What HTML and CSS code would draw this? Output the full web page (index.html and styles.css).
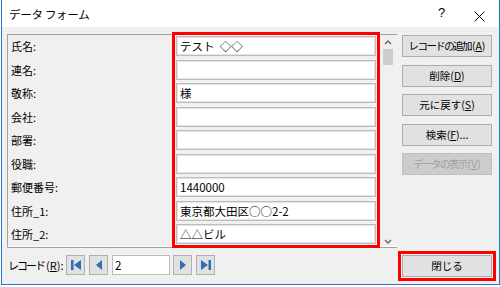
FILE: index.html
```html
<!DOCTYPE html>
<html>
<head>
  <title>データ フォーム</title>
  <link rel="stylesheet" href="styles.css">
</head>
<body>
  <div class="window">
    <div class="titlebar">
      <span class="title">データ フォーム</span>
      <span class="help">?</span>
      <span class="close-x">
        <svg width="11" height="11" viewBox="0 0 11 11"><path d="M0.5 0.5 L10.5 10.5 M10.5 0.5 L0.5 10.5" stroke="#000" stroke-width="1"/></svg>
      </span>
    </div>

    <div class="content">
      <div class="left">
        <div class="panel">
          <div class="labels">
            <div class="label">氏名:</div>
            <div class="label">連名:</div>
            <div class="label">敬称:</div>
            <div class="label">会社:</div>
            <div class="label">部署:</div>
            <div class="label">役職:</div>
            <div class="label">郵便番号:</div>
            <div class="label">住所_1:</div>
            <div class="label">住所_2:</div>
          </div>
          <div class="fields">
            <div class="field">テスト&nbsp;&nbsp;◇◇</div>
            <div class="field"></div>
            <div class="field">様</div>
            <div class="field"></div>
            <div class="field"></div>
            <div class="field"></div>
            <div class="field">1440000</div>
            <div class="field">東京都大田区○○2-2</div>
            <div class="field">△△ビル</div>
          </div>
          <div class="scroll">
            <svg class="arrow" width="10" height="8" viewBox="0 0 10 8"><path d="M2 6 L5 3 L8 6" fill="none" stroke="#606060" stroke-width="1.3"/></svg>
            <div class="thumb"></div>
            <div class="track"></div>
            <svg class="arrow" width="10" height="8" viewBox="0 0 10 8"><path d="M2 2 L5 5 L8 2" fill="none" stroke="#606060" stroke-width="1.3"/></svg>
          </div>
        </div>

        <div class="nav">
          <span class="nav-label"><span class="jp">レコード</span>(<u>R</u>):</span>
          <span class="nav-btn">
            <svg width="12" height="12" viewBox="0 0 12 12"><rect x="1" y="1" width="2.5" height="10" fill="#2f6fb3"/><path d="M11 1 L4 6 L11 11 Z" fill="#2f6fb3"/></svg>
          </span>
          <span class="nav-btn">
            <svg width="12" height="12" viewBox="0 0 12 12"><path d="M9 1 L3 6 L9 11 Z" fill="#2f6fb3"/></svg>
          </span>
          <span class="nav-input">2</span>
          <span class="nav-btn">
            <svg width="12" height="12" viewBox="0 0 12 12"><path d="M3 1 L9 6 L3 11 Z" fill="#2f6fb3"/></svg>
          </span>
          <span class="nav-btn">
            <svg width="12" height="12" viewBox="0 0 12 12"><path d="M1 1 L8 6 L1 11 Z" fill="#2f6fb3"/><rect x="8.5" y="1" width="2.5" height="10" fill="#2f6fb3"/></svg>
          </span>
        </div>
      </div>

      <div class="buttons">
        <div class="btn"><span class="jp">レコードの追加</span>(<u>A</u>)</div>
        <div class="btn">削除(<u>D</u>)</div>
        <div class="btn">元に戻す(<u>S</u>)</div>
        <div class="btn">検索(<u>F</u>)...</div>
        <div class="btn disabled"><span class="jp">データの表示</span>(<u>V</u>)</div>
        <div class="spacer"></div>
        <div class="btn close-btn">閉じる</div>
      </div>
    </div>
  </div>
</body>
</html>
```

FILE: styles.css
```css
html, body {
  margin: 0;
  padding: 0;
  background-color: #fff;
}

body {
  font-family: "Noto Sans CJK JP", "Noto Sans", sans-serif;
  font-size: 11px;
  color: #000;
}

.window {
  width: 497px;
  height: 284px;
  margin-left: 1px;
  border: 1px solid #1e7ad2;
  border-top: none;
  background-color: #f0f0f0;
  display: flex;
  flex-direction: column;
}

.titlebar {
  height: 27px;
  background-color: #fff;
  display: flex;
  align-items: center;
  position: relative;
}

.title {
  margin-left: 7px;
  font-size: 11.5px;
  letter-spacing: -0.3px;
}

.help {
  position: absolute;
  left: 436px;
  top: 5px;
  font-family: "Liberation Sans", sans-serif;
  font-size: 13px;
}

.close-x {
  position: absolute;
  left: 472px;
  top: 9px;
  height: 11px;
}

.content {
  flex: 1;
  display: flex;
  padding: 7px 0 0 5px;
}

.left {
  display: flex;
  flex-direction: column;
}

.panel {
  width: 390px;
  height: 213px;
  border-top: 1px solid #a0a0a0;
  border-left: 1px solid #a0a0a0;
  border-bottom: 1px solid #fff;
  box-shadow: 0 1px 0 #a0a0a0;
  display: flex;
  padding-top: 1px;
  box-sizing: border-box;
}

.labels {
  width: 165px;
  padding-left: 3px;
  display: flex;
  flex-direction: column;
}

.label {
  height: 20px;
  line-height: 20px;
  margin-bottom: 3.5px;
}

.fields {
  width: 200px;
  display: flex;
  flex-direction: column;
  outline: 3px solid #ff0000;
  outline-offset: 1px;
  align-self: flex-start;
}

.field {
  height: 20px;
  line-height: 18px;
  margin-bottom: 3.5px;
  border: 1px solid #bcbcbc;
  box-shadow: inset 0 0 0 1px #e3e3e3;
  background-color: #fff;
  box-sizing: border-box;
  padding-left: 3px;
  font-size: 11.5px;
}

.field:last-child {
  margin-bottom: 0;
}

.scroll {
  width: 10px;
  margin-left: 7px;
  display: flex;
  flex-direction: column;
  align-items: center;
  padding-top: 2px;
}

.thumb {
  width: 10px;
  height: 16px;
  margin-top: 3px;
  background-color: #cdcdcd;
}

.track {
  flex: 1;
}

.arrow {
  display: block;
}

.nav {
  display: flex;
  align-items: center;
  margin-top: 8px;
  height: 20px;
}

.nav-label {
  margin-left: 1px;
  width: 58px;
  white-space: nowrap;
}

.nav-label .jp {
  letter-spacing: -2px;
  margin-right: 2px;
}

.nav-btn {
  width: 17px;
  height: 18px;
  border: 1px solid #b0b0b0;
  background-color: #e1e1e1;
  display: flex;
  align-items: center;
  justify-content: center;
  margin-right: 4px;
}

.nav-input {
  height: 18px;
  line-height: 18px;
  border: 1px solid #bcbcbc;
  background-color: #fff;
  padding-left: 2px;
  margin-right: 3px;
  font-size: 11.5px;
  width: 54px;
}

.buttons {
  margin-left: 5px;
  display: flex;
  flex-direction: column;
  padding-top: 1px;
}

.btn {
  width: 88px;
  height: 20px;
  line-height: 20px;
  border: 1px solid #adadad;
  background-color: #e1e1e1;
  text-align: center;
  margin-bottom: 7.5px;
  font-size: 10.5px;
  white-space: nowrap;
}

.btn .jp {
  letter-spacing: -1.6px;
  margin-right: 1px;
}

.btn.disabled {
  color: #a0a0a0;
  background-color: #cccccc;
  border-color: #bfbfbf;
}

.spacer {
  flex: 1;
}

.close-btn {
  outline: 3px solid #ff0000;
  outline-offset: 1px;
  margin-bottom: 7px;
}
```
